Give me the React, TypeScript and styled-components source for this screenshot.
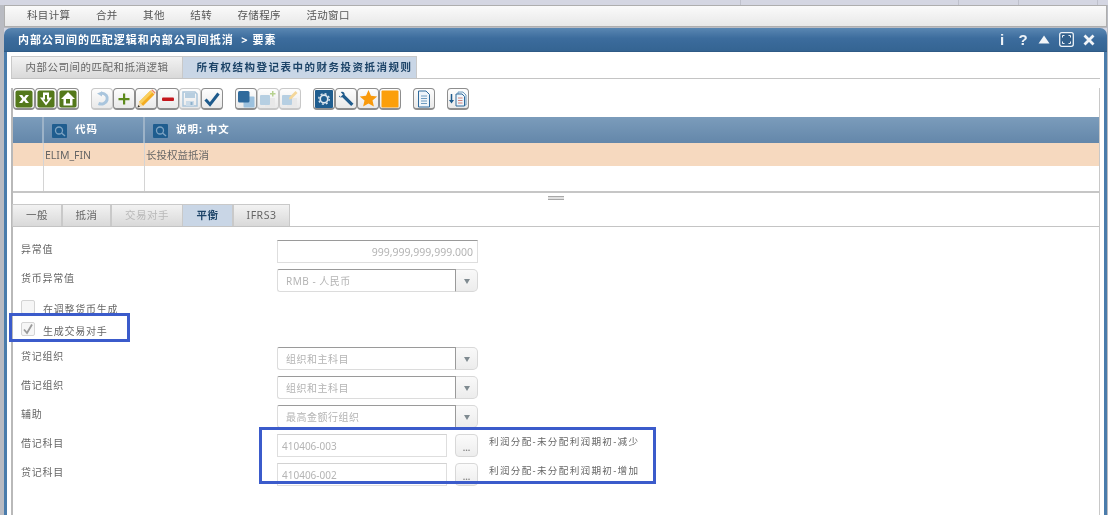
import React from 'react';
import styled, { createGlobalStyle } from 'styled-components';

const GlobalStyle = createGlobalStyle`
  html, body {
    margin: 0;
    padding: 0;
    background: #b9bbc2;
    overflow: hidden;
  }
  * {
    box-sizing: border-box;
  }
`;

const FONT = '"Noto Sans", "Noto Sans CJK SC", sans-serif';

const Page = styled.div`
  width: 1108px;
  height: 515px;
  display: flex;
  flex-direction: column;
  font-family: ${FONT};
  font-size: 10px;
  color: #555;
  overflow: hidden;
  filter: blur(0.45px);
`;

const TopBand = styled.div`
  height: 5px;
  flex: none;
  display: flex;
  background: #d4d6e2;
`;

const TopCell = styled.div<{ $w: number }>`
  width: ${(p) => p.$w}px;
  flex: none;
  border-right: 1px solid #bfc1cc;
`;

const MenuBar = styled.div`
  height: 22px;
  flex: none;
  margin-left: 4px;
  margin-right: 1px;
  padding: 0 0 3px 22px;
  display: flex;
  align-items: center;
  gap: 25.5px;
  border: 1px solid #aeaeae;
  background: linear-gradient(#fafafa, #e8e8e8);
  font-size: 10.5px;
  letter-spacing: 0.35px;
  color: #555;
`;

const Win = styled.div`
  flex: 1;
  min-height: 0;
  margin: 1px 1px 0 4px;
  display: flex;
  flex-direction: column;
  background: #d4d6e2;
`;

const TitleBar = styled.div`
  height: 24px;
  flex: none;
  padding: 0 12px 0 14px;
  display: flex;
  align-items: center;
  justify-content: space-between;
  border-radius: 7px 7px 0 0;
  background: linear-gradient(#5a87b2, #3c6c9d 45%, #346492);
  border-bottom: 1px solid #2f5b86;
  color: #fff;
  font-weight: 700;
  font-size: 11px;
  letter-spacing: 0.98px;
`;

const TitleText = styled.span`
  margin-bottom: 2px;
`;

const TitleIcons = styled.div`
  display: flex;
  align-items: center;
  gap: 9px;
`;

const TitleGlyph = styled.span`
  width: 12px;
  font-family: "Liberation Sans", sans-serif;
  font-size: 15px;
  font-weight: 700;
  line-height: 16px;
  letter-spacing: 0;
  text-align: center;
  color: #eef3f8;
`;

const Body = styled.div`
  flex: 1;
  min-height: 0;
  padding: 4px 4px 0 4px;
  background: #fff;
  border-left: 3px solid #4a7cab;
  border-right: 3px solid #4a7cab;
`;

const TabStrip = styled.div`
  display: flex;
  height: 23px;
  margin-right: 0;
  border-bottom: 1px solid #c4c4c4;
`;

const Tab = styled.div<{ $w: number; $active?: boolean; $disabled?: boolean; $spread?: boolean }>`
  width: ${(p) => p.$w}px;
  height: 22px;
  flex: none;
  display: flex;
  align-items: center;
  justify-content: center;
  padding: 0 0 2px ${(p) => (p.$spread ? '10px' : '0')};
  letter-spacing: ${(p) => (p.$spread ? '1.5px' : '0.5px')};
  font-size: 10.5px;
  border: 1px solid #c9c9c9;
  border-bottom: none;
  border-left: ${(p) => (p.$active ? 'none' : '1px solid #c9c9c9')};
  background: ${(p) => (p.$active ? '#c9d6e6' : 'linear-gradient(#f2f2f2, #d9d9d9)')};
  color: ${(p) => (p.$active ? '#1d4468' : p.$disabled ? '#b8b8b8' : '#666')};
  font-weight: ${(p) => (p.$active ? 700 : 400)};
`;

const Panel = styled.div`
  height: 437px;
  border-left: 2px solid #b9b9b9;
  border-right: 1px solid #c8c8c8;
`;

const Toolbar = styled.div`
  height: 22px;
  margin-top: 9px;
  display: flex;
  align-items: center;
`;

const ToolGap = styled.div<{ $w: number }>`
  width: ${(p) => p.$w}px;
  flex: none;
`;

const ToolButton = styled.div<{ $faded?: boolean }>`
  width: 22px;
  height: 22px;
  flex: none;
  display: flex;
  align-items: center;
  justify-content: center;
  border: 1px solid ${(p) => (p.$faded ? '#c8c8c8' : '#8e8e8e')};
  border-bottom-width: 2px;
  border-radius: 4px;
  background: linear-gradient(#fdfdfd, #e9e9e9);
`;

const Table = styled.div`
  margin-top: 7px;
  border-bottom: 2px solid #c6c6c6;
`;

const TableRow = styled.div<{ $h: number; $kind: 'head' | 'selected' | 'empty' }>`
  height: ${(p) => p.$h}px;
  display: grid;
  grid-template-columns: 31px 101px 1fr;
  background: ${(p) =>
    p.$kind === 'head'
      ? 'linear-gradient(#7b9cbb, #6487aa)'
      : p.$kind === 'selected'
        ? '#f6d9bf'
        : '#fff'};
`;

const HeadCell = styled.div`
  display: flex;
  align-items: center;
  gap: 8px;
  padding: 2px 0 0 8px;
  border-right: 2px solid #9db3c8;
  color: #fff;
  font-weight: 700;
  font-size: 10.5px;
  letter-spacing: 1px;
  &:last-child {
    border-right: none;
  }
`;

const HeadText = styled.span`
  margin-bottom: 6px;
`;

const Cell = styled.div`
  display: flex;
  align-items: center;
  padding-left: 1px;
  border-right: 1px solid #d4d4d4;
  color: #666;
  font-size: 10.5px;
  &:last-child {
    border-right: none;
  }
`;

const Splitter = styled.div`
  height: 11px;
  display: flex;
  justify-content: center;
  padding-top: 3px;
`;

const Grip = styled.div`
  width: 16px;
  height: 4px;
  border-top: 1px solid #a8a8a8;
  border-bottom: 1px solid #a8a8a8;
  background: #e0e0e0;
`;

const SubTabStrip = styled(TabStrip)`
  margin-left: -1px;
`;

const Form = styled.div`
  padding: 13px 0 0 8px;
  display: flex;
  flex-direction: column;
`;

const FieldRow = styled.div<{ $gap?: number }>`
  display: grid;
  grid-template-columns: 256px auto 1fr;
  height: 23px;
  margin-bottom: ${(p) => p.$gap ?? 6}px;
  align-items: start;
`;

const Label = styled.div`
  font-size: 10px;
  line-height: 19px;
  letter-spacing: 0.75px;
  color: #666;
`;

const TextInput = styled.div<{ $w: number; $right?: boolean; $dark?: boolean }>`
  width: ${(p) => p.$w}px;
  height: 23px;
  display: flex;
  align-items: center;
  justify-content: ${(p) => (p.$right ? 'flex-end' : 'flex-start')};
  padding: 0 4px;
  border: 1px solid #dedede;
  border-top: 1px solid ${(p) => (p.$dark ? '#9a9a9a' : '#d2d2d2')};
  color: #b4b4b4;
  font-size: ${(p) => (p.$right ? '10.5px' : '10px')};
`;

const Select = styled.div`
  width: 201px;
  height: 23px;
  display: grid;
  grid-template-columns: 179px 22px;
`;

const SelectValue = styled.div`
  display: flex;
  align-items: center;
  padding-left: 8px;
  border: 1px solid #dcdcdc;
  border-top-color: #9a9a9a;
  border-right: 1px solid #9a9a9a;
  border-radius: 2px 0 0 3px;
  color: #b4b4b4;
  font-size: 10px;
  letter-spacing: 0.5px;
`;

const SelectArrow = styled.div`
  display: flex;
  align-items: center;
  justify-content: center;
  border: 1px solid #d8d8d8;
  border-left: none;
  border-radius: 0 5px 5px 0;
  background: linear-gradient(#f9f9f9, #ececec);
  &::after {
    content: '';
    border-left: 3.5px solid transparent;
    border-right: 3.5px solid transparent;
    border-top: 5px solid #7f8a90;
    margin-top: 1px;
  }
`;

const Lookup = styled.div`
  display: flex;
  width: 201px;
  justify-content: space-between;
`;

const LookupButton = styled.div`
  width: 23px;
  height: 23px;
  display: flex;
  align-items: flex-end;
  justify-content: center;
  padding-bottom: 3px;
  border: 1px solid #d8d8d8;
  border-radius: 4px;
  background: linear-gradient(#fbfbfb, #ededed);
  color: #888;
  font-size: 9px;
  font-weight: 700;
  line-height: 10px;
`;

const Hint = styled.div`
  padding-left: 11px;
  font-size: 9.6px;
  line-height: 16px;
  letter-spacing: 1.3px;
  color: #666;
  white-space: nowrap;
`;

const CheckRow = styled.div<{ $h: number; $gap: number }>`
  height: ${(p) => p.$h}px;
  margin-bottom: ${(p) => p.$gap}px;
  display: flex;
  align-items: center;
  gap: 8px;
`;

const CheckBox = styled.div`
  width: 14px;
  height: 14px;
  flex: none;
  display: flex;
  align-items: center;
  justify-content: center;
  border: 1px solid #d4d4d4;
  border-radius: 2px;
  background: #f6f6f6;
`;

const CheckLabel = styled.div`
  padding-top: 2px;
  font-size: 10px;
  letter-spacing: 0.75px;
  color: #666;
`;

const Annotation = styled.div<{ $x: number; $y: number; $w: number; $h: number }>`
  position: absolute;
  left: ${(p) => p.$x}px;
  top: ${(p) => p.$y}px;
  width: ${(p) => p.$w}px;
  height: ${(p) => p.$h}px;
  border: 3px solid #3b5bcb;
  pointer-events: none;
`;

const Frame = styled.div`
  position: relative;
`;

const GREEN = '#54791b';
const BLUE = '#2f6a9c';
const LIGHT = '#a9c5dd';

const Excel = () => (
  <svg width="18" height="18" viewBox="0 0 18 18">
    <rect x="0.500" y="0.500" width="17" height="17" rx="2" fill={GREEN} />
    <path d="M4 5h3.200L9 7.400 10.800 5H14l-3.200 4 3.200 4h-3.200L9 10.600 7.200 13H4l3.200-4z" fill="#fff" />
  </svg>
);

const GreenDown = () => (
  <svg width="18" height="18" viewBox="0 0 18 18">
    <rect x="0.500" y="0.500" width="17" height="17" rx="2" fill={GREEN} />
    <path d="M6 2.500h6v5h3L9 15.500 3 7.500h3z" fill="#fff" />
    <path d="M8 5h2v4.500h1.500L9 12.500 6.500 9.500H8z" fill={GREEN} />
  </svg>
);

const GreenUp = () => (
  <svg width="18" height="18" viewBox="0 0 18 18">
    <rect x="0.500" y="0.500" width="17" height="17" rx="2" fill={GREEN} />
    <path d="M9 2l7 7h-2.500v6.500h-9V9H2z" fill="#fff" />
    <rect x="7" y="9" width="4" height="4.500" fill={GREEN} />
  </svg>
);

const Undo = () => (
  <svg width="18" height="18" viewBox="0 0 18 18" fill="none">
    <path d="M8 3c5 .5 7 3.500 6 7-1 3.500-5 5-8.500 3.500" stroke={LIGHT} strokeWidth="3" />
    <path d="M4 3.500l5-2v5z" fill={LIGHT} />
  </svg>
);

const Plus = () => (
  <svg width="14" height="14" viewBox="0 0 14 14">
    <path d="M6 1.500h2.200V6h4.300v2.200H8.200v4.300H6V8.200H1.500V6H6z" fill="#5d8a1c" />
  </svg>
);

const Pencil = () => (
  <svg width="20" height="20" viewBox="0 0 20 20">
    <path d="M14.500 1.500l4 4L7 17l-4-4z" fill="#f3ac22" />
    <path d="M14.500 1.500l2 2L5 15l-2-2z" fill="#f9cf5d" />
    <path d="M15 1l1.500-.5 3 3L19 5z" fill="#ee8a63" />
    <path d="M3 13l4 4-5.500 1.500z" fill="#f4dcb2" />
    <path d="M2.300 16l1.700 1.700-2.500.8z" fill="#333" />
  </svg>
);

const Minus = () => (
  <svg width="14" height="14" viewBox="0 0 14 14">
    <rect x="1" y="5.500" width="12" height="3.500" rx="1" fill="#c4161c" />
  </svg>
);

const Save = () => (
  <svg width="18" height="18" viewBox="0 0 18 18" fill="none">
    <path d="M2 2h12l2 2v12H2z" stroke="#aac5da" strokeWidth="1.500" />
    <rect x="4" y="3" width="10" height="5" fill="#b7cee0" />
    <rect x="5" y="11" width="8" height="5" fill="#cbdbe8" />
    <rect x="9.500" y="12" width="2" height="3" fill="#8fb1cb" />
  </svg>
);

const Check = () => (
  <svg width="18" height="18" viewBox="0 0 18 18" fill="none">
    <path d="M2.500 9.500L7 14.500 15.500 3.500" stroke="#1d5a8c" strokeWidth="3" />
  </svg>
);

const Copy = () => (
  <svg width="18" height="18" viewBox="0 0 18 18">
    <rect x="6.500" y="6.500" width="11" height="11" rx="1" fill="#9cc1de" />
    <rect x="1" y="1" width="11.500" height="11.500" rx="1.500" fill={BLUE} />
  </svg>
);

const CopyAdd = () => (
  <svg width="18" height="18" viewBox="0 0 18 18">
    <rect x="6" y="8" width="10" height="9" fill="#e8e8e8" />
    <rect x="1" y="5" width="10" height="10" rx="1" fill="#b6cfe2" />
    <path d="M13 1h1.500v2h2v1.500h-2v2H13v-2h-2V3h2z" fill="#b7d28f" />
  </svg>
);

const CopyEdit = () => (
  <svg width="18" height="18" viewBox="0 0 18 18">
    <rect x="6" y="8" width="10" height="9" fill="#e8e8e8" />
    <rect x="1" y="5" width="10" height="10" rx="1" fill="#b6cfe2" />
    <path d="M14.500 1l2 2-6 6-2.500.5.500-2.500z" fill="#f4d79a" />
  </svg>
);

const Gear = () => (
  <svg width="18" height="18" viewBox="0 0 18 18" fill="none">
    <rect x="0" y="0" width="18" height="18" rx="1" fill="#1f5d8f" />
    <circle cx="9" cy="9" r="3.800" stroke="#dfe8f0" strokeWidth="1.700" />
    <circle cx="9" cy="9" r="5.300" stroke="#dfe8f0" strokeWidth="1.300" strokeDasharray="2 2.160" />
  </svg>
);

const Wrench = () => (
  <svg width="18" height="18" viewBox="0 0 18 18">
    <path
      d="M2 5.500L3.500 7 6 4.500 3.800 2.200C5.800 1 8 2.500 7.700 5L16.500 13.800 14.200 16 5.300 7.300C3.300 7.800 1.500 7 2 5.500z"
      fill="#205c8d"
    />
  </svg>
);

const Star = () => (
  <svg width="19" height="19" viewBox="0 0 19 19">
    <path d="M9.500 1l2.500 5.800 6.200.6-4.700 4.100 1.400 6.100-5.400-3.200-5.400 3.200 1.400-6.100L.8 7.400 7 6.800z" fill="#f99a0c" />
  </svg>
);

const Square = () => (
  <svg width="18" height="18" viewBox="0 0 18 18">
    <rect x="0.500" y="0.500" width="17" height="17" rx="1" fill="#fb9f0a" />
  </svg>
);

const Doc = () => (
  <svg width="16" height="18" viewBox="0 0 16 18" fill="none">
    <path d="M2.500 1h7.500l3.500 3.500V17h-11z" fill="#eef4f9" stroke="#2f6a9c" />
    <path d="M5 6h6M5 8.500h6M5 11h6M5 13.500h6" stroke="#6f9cc0" />
  </svg>
);

const DocImport = () => (
  <svg width="20" height="18" viewBox="0 0 20 18" fill="none">
    <path d="M10 2h5l3 3v10h-8z" fill="#e9f0f6" stroke="#6f9cc0" />
    <path d="M8 4h6l2.500 2.500V16H8z" fill="#eef4f9" stroke="#2f6a9c" />
    <path d="M10 8h4.500M10 10.500h4.500M10 13h4.500" stroke="#d2827d" />
    <path d="M3.500 4v7" stroke="#1d5a8c" strokeWidth="1.500" />
    <path d="M1 10h5l-2.500 3.500z" fill="#1d5a8c" />
  </svg>
);

const SearchMark = () => (
  <svg width="15" height="14" viewBox="0 0 15 14" fill="none">
    <rect width="15" height="14" rx="1" fill="#1f5d8f" />
    <circle cx="7" cy="6.500" r="3.500" stroke="#7ea3c2" strokeWidth="1.300" />
    <path d="M9.500 9l3.500 3" stroke="#7ea3c2" strokeWidth="1.500" />
  </svg>
);

const Expand = () => (
  <svg width="15" height="15" viewBox="0 0 15 15" fill="none">
    <rect x="0.700" y="0.700" width="13.600" height="13.600" rx="2" fill="#315f8c" stroke="#eef3f8" strokeWidth="1.300" />
    <path d="M3.500 5.500v-2h2M9.500 3.500h2v2M11.500 9.500v2h-2M5.500 11.500h-2v-2" stroke="#eef3f8" />
  </svg>
);

const CloseMark = () => (
  <svg width="12" height="12" viewBox="0 0 12 12" fill="none">
    <path d="M1.500 1.500l9 9M10.500 1.500l-9 9" stroke="#f2f5f8" strokeWidth="2.800" />
  </svg>
);

const Collapse = () => (
  <svg width="12" height="9" viewBox="0 0 12 9">
    <path d="M6 0.500l5.500 8H.5z" fill="#f2f5f8" />
  </svg>
);

const Tick = () => (
  <svg width="12" height="12" viewBox="0 0 12 12" fill="none">
    <path d="M2 6.500L5 10l5-8.500" stroke="#9a9a9a" strokeWidth="1.800" />
  </svg>
);

const menus = ['科目计算', '合并', '其他', '结转', '存储程序', '活动窗口'];

const subTabs = [
  { label: '一般', w: 50 },
  { label: '抵消', w: 49 },
  { label: '交易对手', w: 72, disabled: true },
  { label: '平衡', w: 50, active: true },
  { label: 'IFRS3', w: 57 },
];

export default function App() {
  return (
    <Frame>
      <GlobalStyle />
      <Page>
        <TopBand>
          <TopCell $w={741} />
          <TopCell $w={218} />
          <TopCell $w={60} />
          <TopCell $w={79} />
        </TopBand>
        <MenuBar>
          {menus.map((m) => (
            <span key={m}>{m}</span>
          ))}
        </MenuBar>
        <Win>
          <TitleBar>
            <TitleText>内部公司间的匹配逻辑和内部公司间抵消 &nbsp;&gt; 要素</TitleText>
            <TitleIcons>
              <TitleGlyph>i</TitleGlyph>
              <TitleGlyph>?</TitleGlyph>
              <Collapse />
              <Expand />
              <CloseMark />
            </TitleIcons>
          </TitleBar>
          <Body>
            <TabStrip>
              <Tab $w={172}>内部公司间的匹配和抵消逻辑</Tab>
              <Tab $w={234} $active $spread>
                所有权结构登记表中的财务投资抵消规则
              </Tab>
            </TabStrip>
            <Panel>
              <Toolbar>
                <ToolButton><Excel /></ToolButton>
                <ToolButton><GreenDown /></ToolButton>
                <ToolButton><GreenUp /></ToolButton>
                <ToolGap $w={12} />
                <ToolButton $faded><Undo /></ToolButton>
                <ToolButton><Plus /></ToolButton>
                <ToolButton><Pencil /></ToolButton>
                <ToolButton><Minus /></ToolButton>
                <ToolButton $faded><Save /></ToolButton>
                <ToolButton><Check /></ToolButton>
                <ToolGap $w={12} />
                <ToolButton><Copy /></ToolButton>
                <ToolButton $faded><CopyAdd /></ToolButton>
                <ToolButton $faded><CopyEdit /></ToolButton>
                <ToolGap $w={12} />
                <ToolButton><Gear /></ToolButton>
                <ToolButton><Wrench /></ToolButton>
                <ToolButton><Star /></ToolButton>
                <ToolButton><Square /></ToolButton>
                <ToolGap $w={12} />
                <ToolButton><Doc /></ToolButton>
                <ToolGap $w={12} />
                <ToolButton><DocImport /></ToolButton>
              </Toolbar>
              <Table>
                <TableRow $h={26} $kind="head">
                  <HeadCell />
                  <HeadCell>
                    <SearchMark />
                    <HeadText>代码</HeadText>
                  </HeadCell>
                  <HeadCell>
                    <SearchMark />
                    <HeadText>说明: 中文</HeadText>
                  </HeadCell>
                </TableRow>
                <TableRow $h={23} $kind="selected">
                  <Cell />
                  <Cell>ELIM_FIN</Cell>
                  <Cell>长投权益抵消</Cell>
                </TableRow>
                <TableRow $h={25} $kind="empty">
                  <Cell />
                  <Cell />
                  <Cell />
                </TableRow>
              </Table>
              <Splitter>
                <Grip />
              </Splitter>
              <SubTabStrip>
                {subTabs.map((t) => (
                  <Tab key={t.label} $w={t.w} $active={t.active} $disabled={t.disabled}>
                    {t.label}
                  </Tab>
                ))}
              </SubTabStrip>
              <Form>
                <FieldRow>
                  <Label>异常值</Label>
                  <TextInput $w={201} $right $dark>
                    999,999,999,999.000
                  </TextInput>
                </FieldRow>
                <FieldRow $gap={8}>
                  <Label>货币异常值</Label>
                  <Select>
                    <SelectValue>RMB - 人民币</SelectValue>
                    <SelectArrow />
                  </Select>
                </FieldRow>
                <CheckRow $h={14} $gap={8}>
                  <CheckBox />
                  <CheckLabel>在调整货币生成</CheckLabel>
                </CheckRow>
                <CheckRow $h={14} $gap={11}>
                  <CheckBox>
                    <Tick />
                  </CheckBox>
                  <CheckLabel>生成交易对手</CheckLabel>
                </CheckRow>
                <FieldRow>
                  <Label>贷记组织</Label>
                  <Select>
                    <SelectValue>组织和主科目</SelectValue>
                    <SelectArrow />
                  </Select>
                </FieldRow>
                <FieldRow>
                  <Label>借记组织</Label>
                  <Select>
                    <SelectValue>组织和主科目</SelectValue>
                    <SelectArrow />
                  </Select>
                </FieldRow>
                <FieldRow>
                  <Label>辅助</Label>
                  <Select>
                    <SelectValue>最高金额行组织</SelectValue>
                    <SelectArrow />
                  </Select>
                </FieldRow>
                <FieldRow>
                  <Label>借记科目</Label>
                  <Lookup>
                    <TextInput $w={170}>410406-003</TextInput>
                    <LookupButton>...</LookupButton>
                  </Lookup>
                  <Hint>利润分配-未分配利润期初-减少</Hint>
                </FieldRow>
                <FieldRow>
                  <Label>贷记科目</Label>
                  <Lookup>
                    <TextInput $w={170}>410406-002</TextInput>
                    <LookupButton>...</LookupButton>
                  </Lookup>
                  <Hint>利润分配-未分配利润期初-增加</Hint>
                </FieldRow>
              </Form>
            </Panel>
          </Body>
        </Win>
      </Page>
      <Annotation $x={9} $y={313} $w={121} $h={29} />
      <Annotation $x={259} $y={427} $w={397} $h={57} />
    </Frame>
  );
}
